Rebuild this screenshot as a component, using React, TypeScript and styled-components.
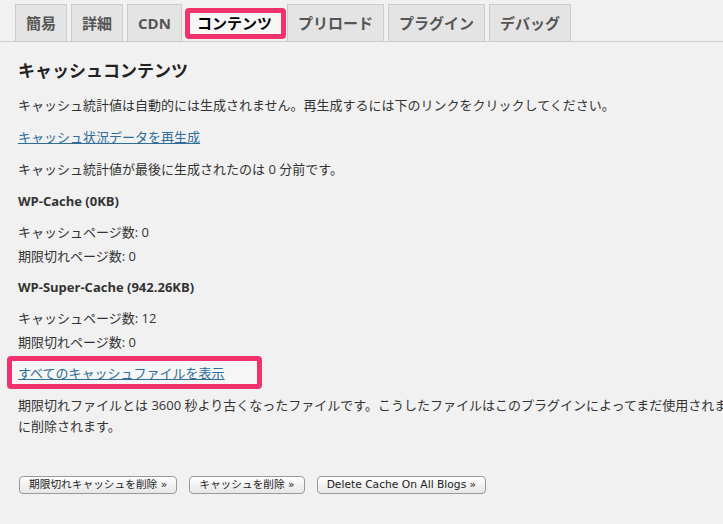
import React from "react";
import styled, { createGlobalStyle } from "styled-components";

const GlobalStyle = createGlobalStyle`
  * {
    box-sizing: border-box;
  }

  html,
  body {
    margin: 0;
    padding: 0;
    background: #f1f1f1;
    overflow: hidden;
  }

  body {
    font-family: "Open Sans", "Noto Sans CJK JP", sans-serif;
    font-size: 13px;
    color: #333;
  }
`;

const tabs = ["簡易", "詳細", "CDN", "コンテンツ", "プリロード", "プラグイン", "デバッグ"];
const activeTab = "コンテンツ";

const buttons = ["期限切れキャッシュを削除 »", "キャッシュを削除 »", "Delete Cache On All Blogs »"];

function App() {
  return (
    <>
      <GlobalStyle />
      <Page>
        <TabBar>
          {tabs.map((t) => (
            <Tab key={t} $active={t === activeTab}>
              {t === activeTab && <Highlight $left={-2} $top={3} $width={101} $height={31} />}
              <TabLabel>{t}</TabLabel>
            </Tab>
          ))}
        </TabBar>
        <Content>
          <Title>キャッシュコンテンツ</Title>
          <Para>キャッシュ統計値は自動的には生成されません。再生成するには下のリンクをクリックしてください。</Para>
          <Para>
            <TextLink href="#">キャッシュ状況データを再生成</TextLink>
          </Para>
          <Para>キャッシュ統計値が最後に生成されたのは 0 分前です。</Para>

          <SubTitle>WP-Cache (0KB)</SubTitle>
          <StatList>
            <li>キャッシュページ数: 0</li>
            <li>期限切れページ数: 0</li>
          </StatList>

          <SubTitle>WP-Super-Cache (942.26KB)</SubTitle>
          <StatList>
            <li>キャッシュページ数: 12</li>
            <li>期限切れページ数: 0</li>
          </StatList>

          <LinkPara>
            <Highlight $left={-11} $top={-7} $width={255} $height={33} />
            <TextLink href="#">すべてのキャッシュファイルを表示</TextLink>
          </LinkPara>
          <Note>
            期限切れファイルとは 3600 秒より古くなったファイルです。こうしたファイルはこのプラグインによってまだ使用されますが、定期的
            <br />
            に削除されます。
          </Note>

          <ButtonRow>
            {buttons.map((b) => (
              <Button key={b}>{b}</Button>
            ))}
          </ButtonRow>
        </Content>
      </Page>
    </>
  );
}

export default App;

const Page = styled.div`
  width: 723px;
  height: 524px;
  overflow: hidden;
`;

const TabBar = styled.div`
  display: flex;
  gap: 4px;
  height: 42px;
  padding: 4px 0 0 15px;
  border-bottom: 1px solid #ccc;
`;

const Tab = styled.div<{ $active?: boolean }>`
  position: relative;
  height: 37px;
  padding: 0 10px;
  border: 1px solid ${(p) => (p.$active ? "transparent" : "#ccc")};
  border-bottom: none;
  background: ${(p) => (p.$active ? "transparent" : "#e4e4e4")};
  color: ${(p) => (p.$active ? "#000" : "#555")};
  font-size: 15px;
  font-weight: 700;
  line-height: 36px;
  white-space: nowrap;
`;

const TabLabel = styled.span`
  position: relative;
  z-index: 1;
`;

const Highlight = styled.span<{ $left: number; $top: number; $width: number; $height: number }>`
  position: absolute;
  left: ${(p) => p.$left}px;
  top: ${(p) => p.$top}px;
  width: ${(p) => p.$width}px;
  height: ${(p) => p.$height}px;
  border: 5px solid #f2326d;
  border-radius: 4px;
  background: #f6f6f6;
  z-index: 0;
`;

const Content = styled.div`
  padding: 0 0 0 18px;
`;

const Title = styled.h3`
  margin: 17px 0 12px;
  font-size: 17px;
  font-weight: 700;
  line-height: 24px;
  color: #222;
`;

const Para = styled.p`
  margin: 12px 0;
  line-height: 20px;
  white-space: nowrap;
`;

const TextLink = styled.a`
  position: relative;
  z-index: 1;
  color: #2e6d98;
  text-decoration: underline;
`;

const SubTitle = styled.p`
  margin: 9px 0;
  font-weight: 700;
  line-height: 20px;
  color: #333;
`;

const StatList = styled.ul`
  margin: 9px 0;
  padding: 0;
  list-style: none;
  line-height: 24px;
`;

const LinkPara = styled.p`
  position: relative;
  margin: 9px 0;
  line-height: 20px;
`;

const Note = styled.p`
  margin: 12px 0;
  line-height: 21px;
  white-space: nowrap;
`;

const ButtonRow = styled.div`
  display: flex;
  gap: 12px;
  margin-top: 39px;
  padding-left: 1px;
`;

const Button = styled.button`
  height: 18px;
  padding: 0 9px;
  border: 1px solid #9a9a9a;
  border-radius: 4px;
  background: linear-gradient(#ffffff, #e6e6e6);
  color: #222;
  font-family: "DejaVu Sans", "Noto Sans CJK JP", sans-serif;
  font-size: 10.7px;
  line-height: 16px;
  white-space: nowrap;
  cursor: pointer;
`;
